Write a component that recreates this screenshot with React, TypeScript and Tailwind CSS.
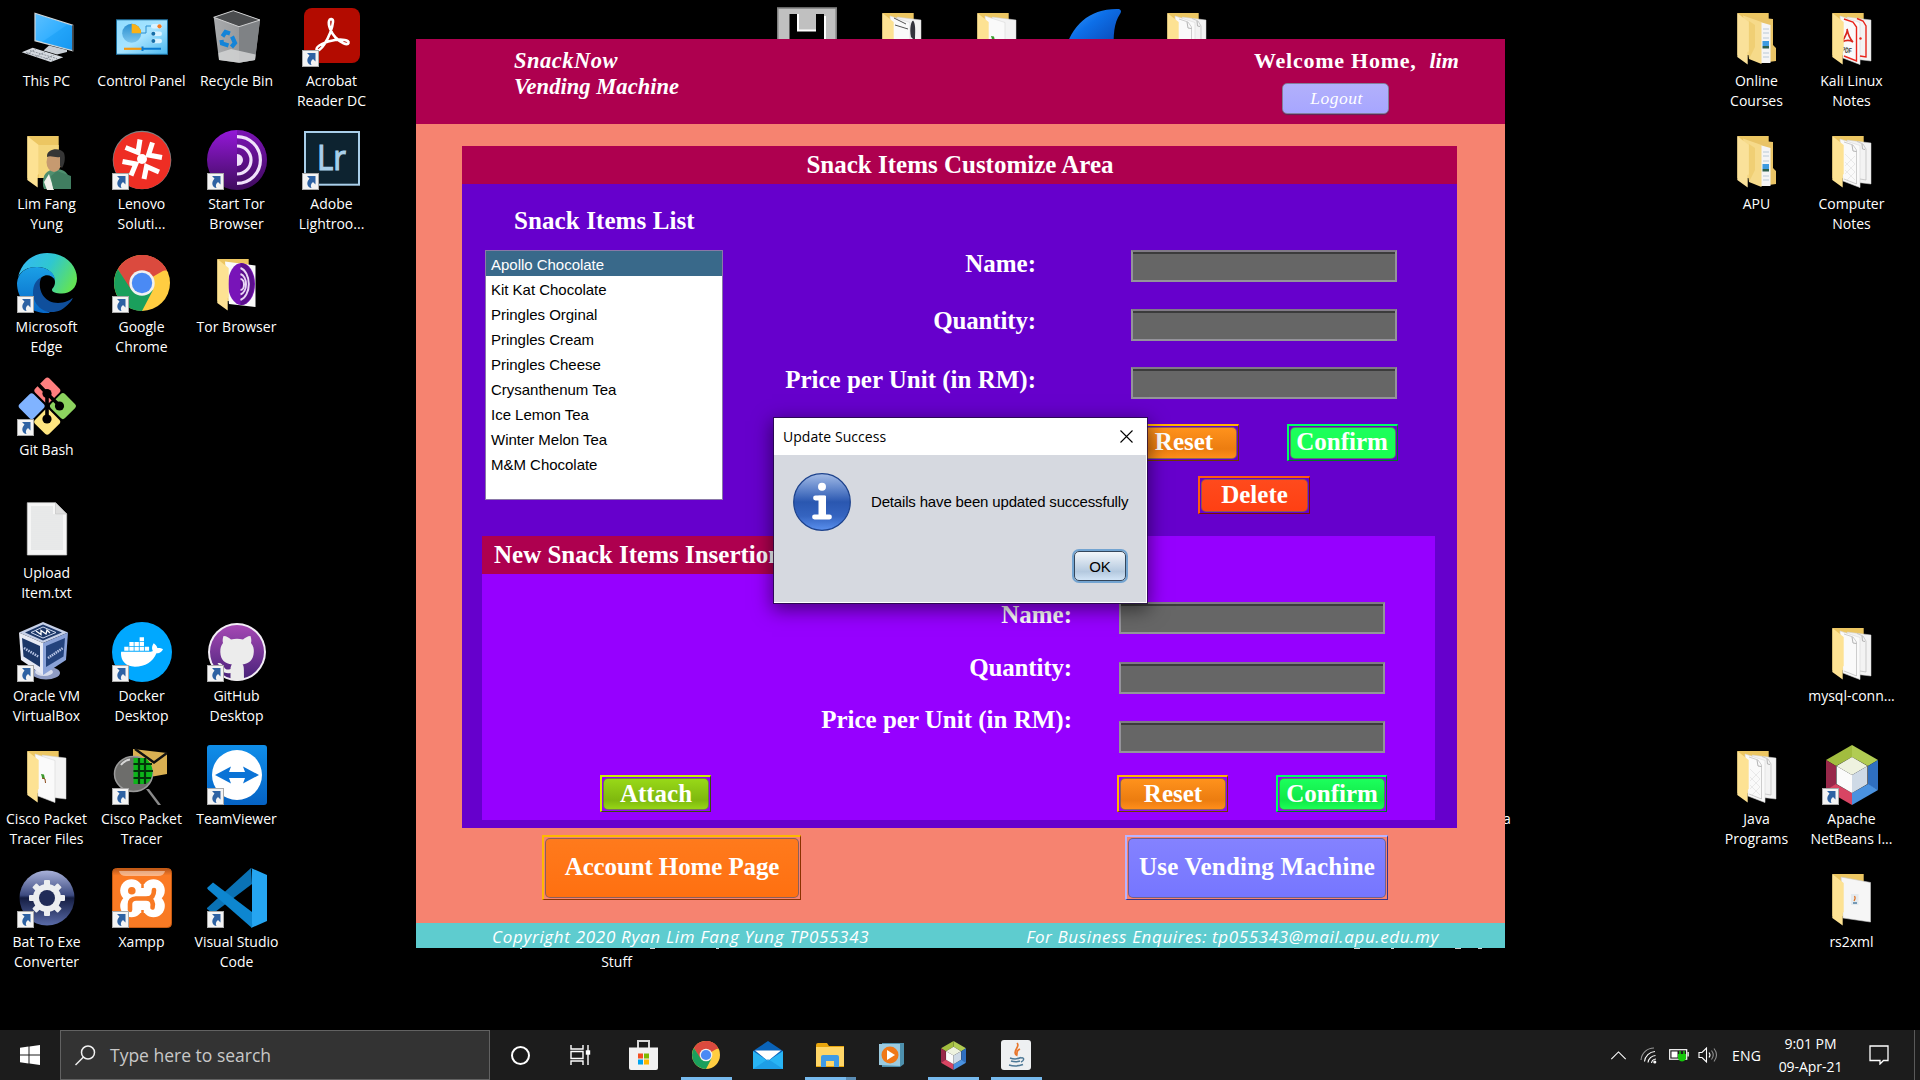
import React from "react";
import { FaDocker } from "react-icons/fa";

type Kids = { children?: React.ReactNode };

const UI = "font-['Open_Sans','Noto_Sans',sans-serif]";
const SERIF = "font-['Liberation_Serif',serif]";

function Svg({ children }: Kids) {
  return (
    <svg viewBox="0 0 60 60" width="60" height="60" className="block">
      {children}
    </svg>
  );
}

/* ---------- desktop icon drawings ---------- */

function ThisPc() {
  return (
    <Svg>
      <defs>
        <linearGradient id="pc" x1="0" y1="0" x2="1" y2="1">
          <stop offset="0" stopColor="#5cc0ff" />
          <stop offset=".5" stopColor="#35b0ff" />
          <stop offset="1" stopColor="#1a94ee" />
        </linearGradient>
      </defs>
      <path d="M18 6.3 55.7 18.3V43.7L18 33.7Z" fill="url(#pc)" stroke="#cfd6da" strokeWidth="1.2" />
      <path d="M55.7 18.3V43.7" stroke="#3a3f44" strokeWidth="1.2" />
      <path d="M25 35 50 18 55 19V43Z" fill="#129bf5" opacity=".45" />
      <path d="M26.5 43.5 32 38.5 50 43 50 45 40 47.5Z" fill="#c9cfd6" />
      <path d="M4.7 45.3 15.7 40.7 46.3 50.3 33.7 55Z" fill="#d5dae0" />
      <path d="M9 45.5 36 53.3M13 43.6 40 51.6M10 47 19 42M19 49.5 28 45M28 52 37 48" stroke="#7b838c" strokeWidth=".8" strokeDasharray="2 1" />
    </Svg>
  );
}

function ControlPanel() {
  return (
    <Svg>
      <defs>
        <linearGradient id="cp" x1="0" y1="0" x2="1" y2="1">
          <stop offset="0" stopColor="#8fdcff" />
          <stop offset=".5" stopColor="#a8e4ff" />
          <stop offset="1" stopColor="#4bb8f0" />
        </linearGradient>
        <linearGradient id="cpp" x1="0" y1="0" x2="0" y2="1">
          <stop offset="0" stopColor="#2a8fd0" />
          <stop offset="1" stopColor="#7cc6ee" />
        </linearGradient>
      </defs>
      <rect x="4.5" y="12.8" width="51" height="34.5" fill="url(#cp)" stroke="#1b6f9f" strokeWidth="1" />
      <circle cx="19.7" cy="26.3" r="9.5" fill="url(#cpp)" />
      <path d="M19.7 26.3V16.8A9.5 9.5 0 0 1 29.2 26.3Z" fill="#fbb116" />
      <path d="M29 26h5v-7h5" fill="none" stroke="#2a8fd0" strokeWidth="1" />
      <rect x="39" y="17" width="11" height="4.5" rx="2.2" fill="#d9f2ff" />
      <circle cx="47.5" cy="19.3" r="2.1" fill="#f47b20" />
      <rect x="39" y="24.5" width="11" height="4.5" rx="2.2" fill="#d9f2ff" />
      <circle cx="41.3" cy="26.8" r="2" fill="#166ea8" />
      <rect x="39" y="31.8" width="11" height="4.5" rx="2.2" fill="#d9f2ff" />
      <circle cx="41.3" cy="34" r="2" fill="#166ea8" />
      <path d="M12 41.8h18" stroke="#f39a14" strokeWidth="2.2" />
      <path d="M30.5 41.8h18.5M30.5 39.5v4.6" stroke="#0a7bd0" strokeWidth="2" />
    </Svg>
  );
}

function RecycleBin() {
  return (
    <Svg>
      <defs>
        <linearGradient id="rb" x1="0" y1="0" x2="1" y2="0">
          <stop offset="0" stopColor="#a9abad" />
          <stop offset="1" stopColor="#8a8c8e" />
        </linearGradient>
      </defs>
      <path d="M6.7 10.3 26.3 3.7 53 13 48 53 32 55.7 12 53Z" fill="url(#rb)" />
      <path d="M32 19.7 53 13 48 53 32 55.7Z" fill="#7f8285" />
      <path d="M6.7 10.3 26.3 3.7 53 13 32 19.7Z" fill="#4a4c4e" stroke="#cfd0d1" strokeWidth="1" />
      <path d="M11.5 46 24 42 48.5 47.5 48 53 32 55.7 12 53Z" fill="#d2d3d4" opacity=".85" />
      <g fill="none" stroke="#1484d8" strokeWidth="4.2">
        <path d="M15.5 29.5 18.5 25 23 26.5" />
        <path d="M25 29.5 28 36 24.5 40" />
        <path d="M21.5 38.6 15 36.5 14.5 33" />
      </g>
    </Svg>
  );
}

function Acrobat() {
  return (
    <Svg>
      <rect x="2" y="1" width="56" height="55" rx="8" fill="#b30b00" />
      <path
        d="M14.5 42.5C14 38.5 24 34.5 33 33C40 32 47.5 33 46.5 36C45.5 39 38.5 35.5 33.5 30.5C29 26 26 18 27 14C27.7 11.2 31.3 11.5 31 15C30.6 21 26.5 31 22.5 37C19 42.5 15.5 45 14.5 42.5Z"
        fill="none"
        stroke="#fff"
        strokeWidth="2.6"
        strokeLinejoin="round"
      />
    </Svg>
  );
}

type FolderKind = "user" | "tor" | "doc" | "plain" | "nested" | "pdf" | "single" | "parrot" | "pen";

function Folder({ kind }: { kind: FolderKind }) {
  const pages = kind === "doc" || kind === "plain" || kind === "pdf" || kind === "parrot" || kind === "pen";
  return (
    <Svg>
      <path d="M10.5 6H41.7V48H10.5Z" fill="#ecc662" />
      <path d="M22 15H41.7V48H22Z" fill="#f4d67c" />
      {pages && (
        <>
          <path d="M25 10 49 13V54L32 52Z" fill="#f3f3f3" stroke="#cfcfcf" strokeWidth=".5" />
          <path d="M18 9 38 15.5V57.5L21 51Z" fill="#fafafa" stroke="#d8d8d8" strokeWidth=".6" />
        </>
      )}
      {(kind === "doc" || kind === "plain" || kind === "pdf") && (
        <>
          <path d="M35 11.5 41 14 44 19V50L38 49" fill="none" stroke={kind === "pdf" ? "#e8251c" : "#b9b9b9"} strokeWidth={kind === "pdf" ? 1.4 : 0.7} />
          <path d="M22 12 31 15 34.5 20V54L22 49" fill="none" stroke={kind === "pdf" ? "#e8251c" : "#b9b9b9"} strokeWidth={kind === "pdf" ? 1.4 : 0.7} />
        </>
      )}
      {(kind === "doc" || kind === "plain") && (
        <path d="M30 15 31 21 34.500 21.500M40 14 40.500 19 43 19.500" fill="none" stroke="#b4b4b4" strokeWidth="1" />
      )}
      {kind === "doc" && <path d="M23 24 33 34M23 32 33 42M23 40 33 50M33 26 23 36M33 34 23 44M33 42 25 50" stroke="#e4e4e4" strokeWidth=".8" />}
      {kind === "pdf" && (
        <>
          <path d="M20 35C23 30 26 24 25 22C26 27 28 32 31 35C28 33 24 33 20 35Z" fill="none" stroke="#d8261c" strokeWidth="1.6" />
          <circle cx="38.5" cy="31.5" r="1.2" fill="#e8251c" />
          <text x="19.500" y="45" fontSize="7.5" fontWeight="700" fill="#333" fontFamily="Liberation Sans" transform="rotate(8 19 45)" textLength="10" lengthAdjust="spacingAndGlyphs">
            PDF
          </text>
        </>
      )}
      {kind === "parrot" && (
        <>
          <path d="M24 29 27 29.5 28 34 25.5 34Z" fill="#3a9a2c" />
          <path d="M25 33 28 34 28.500 38" stroke="#8a4a1a" strokeWidth="1" fill="none" />
        </>
      )}
      {kind === "pen" && <path d="M22 11 34 17M23 18 36 22" stroke="#555" strokeWidth="1" />}
      {kind === "pen" && <path d="M39 30C37 20 40 12 41.500 14C44 18 43 26 43 34Z" fill="#33343c" />}
      {kind === "single" && (
        <>
          <path d="M19 9 48.5 14.5V54L21 50Z" fill="#f6f6f6" stroke="#c9c9c9" strokeWidth=".6" />
          <rect x="29" y="26" width="7.5" height="11" fill="#e4eaee" />
          <path d="M32.5 28Q34 30 32 33" stroke="#e07020" strokeWidth="1.2" fill="none" />
          <path d="M31 35h4" stroke="#5b86a8" strokeWidth="1.6" />
        </>
      )}
      {kind === "tor" && (
        <>
          <path d="M18 8.5 48.5 12.5V54L22 51Z" fill="#fafafa" />
          <ellipse cx="34.5" cy="31" rx="13.5" ry="21" fill="#7814b8" />
          <path d="M33.5 10A13.5 21 0 0 1 33.5 52Z" fill="#5a0f8c" />
          <g fill="none" stroke="#e9d6f5" strokeWidth="2">
            <path d="M33.5 15A11 16.5 0 0 1 33.5 47" />
            <path d="M33.5 21A7 10.5 0 0 1 33.5 41.5" />
            <path d="M33.5 26A3.5 5.5 0 0 1 33.5 37" />
          </g>
        </>
      )}
      {kind === "nested" && (
        <>
          <path d="M18 9 46 12V38L49 41V54L38 55.5Z" fill="#e9c466" />
          <path d="M33 15 43.5 18V56H34Z" fill="#f5f5f5" />
          <path d="M36 22h6M36 26h6M36 31h6M36 46h6M36 50h6" stroke="#b9c9d6" strokeWidth="1" />
          <path d="M35.5 34h6.5v5h-6.5z" fill="#3d9be0" />
          <path d="M35.5 39h6.5v2.5h-6.5z" fill="#2c5f4b" />
          <path d="M16 8.5 34.5 15V57L22 52Z" fill="#f6da8a" />
          <path d="M22 14 28 18V40L22 52Z" fill="#f0cf74" />
        </>
      )}
      <path d="M10.3 6 21.7 15V44L20.7 45V57.5L10.3 50Z" fill={kind === "nested" ? "#fae19a" : "#fde293"} />
      {kind === "user" && (
        <>
          <path d="M26 56C25 44 30 40 38 39C48 39 54 44 54 59H27Z" fill="#4f8f6f" />
          <path d="M32 44 37 60H30L27 52Z" fill="#f0f0ea" />
          <path d="M36 58 34 46 40 41 54 46V59H36Z" fill="#407d60" />
          <ellipse cx="37" cy="32" rx="7.5" ry="10" fill="#c69a70" />
          <path d="M30 26C30 18 44 17 47 23C49 29 47 35 45 38L43 36V27C38 28 34 25 30 27Z" fill="#353535" />
        </>
      )}
    </Svg>
  );
}

function Lenovo() {
  return (
    <Svg>
      <circle cx="30" cy="30" r="29.3" fill="#7d8284" />
      <circle cx="30" cy="30.5" r="28.6" fill="#ee2e24" />
      <circle cx="30" cy="29" r="5" fill="#fff" />
      <path
        d="M28 9.5 26 22.500 13.500 17.500M40.500 12.500 36.500 25 50 27.500M47 42 34.500 36.500 32 49M10.500 31.500 23.800 34 19 45.500"
        fill="none"
        stroke="#fff"
        strokeWidth="5"
      />
    </Svg>
  );
}

function Tor() {
  return (
    <Svg>
      <defs>
        <linearGradient id="tor" x1="0" y1="0" x2="0" y2="1">
          <stop offset="0" stopColor="#9418d8" />
          <stop offset="1" stopColor="#3f0c5e" />
        </linearGradient>
      </defs>
      <circle cx="30" cy="30" r="30" fill="url(#tor)" />
      <path d="M30 0A30 30 0 0 1 30 60Z" fill="#420c5d" opacity=".28" />
      <g fill="none" stroke="#f0e2fa" strokeWidth="3.2">
        <path d="M30 6.6A23.4 23.4 0 0 1 30 53.4" />
        <path d="M30 16A14 14 0 0 1 30 44" />
      </g>
      <path d="M30 24A6 6 0 0 1 30 36Z" fill="#f0e2fa" />
    </Svg>
  );
}

function Lightroom() {
  return (
    <Svg>
      <rect x="3" y="2" width="54" height="52.7" fill="#0d2330" stroke="#a9cfea" strokeWidth="2" />
      <text x="15" y="39.5" fontFamily="Open Sans" fontSize="35" fill="#a9cfea" stroke="#a9cfea" strokeWidth="1.2" textLength="29" lengthAdjust="spacingAndGlyphs">
        Lr
      </text>
    </Svg>
  );
}

function Edge() {
  return (
    <Svg>
      <defs>
        <linearGradient id="e1" x1="0" y1=".2" x2="1" y2=".6">
          <stop offset="0" stopColor="#35b8f4" />
          <stop offset=".5" stopColor="#2fc7d0" />
          <stop offset="1" stopColor="#62e356" />
        </linearGradient>
        <linearGradient id="e2" x1="0" y1="0" x2="0" y2="1">
          <stop offset="0" stopColor="#1ba0e6" />
          <stop offset="1" stopColor="#0768c8" />
        </linearGradient>
      </defs>
      <path d="M1 24C5 8 17 0 30 0C48 0 60 12 60 25.5C60 35 53 40.5 45 40.5C39 40.5 35 39 35 37C35 35 38 34 38 29C38 20 30 14 20 14C10 14 4 18 1 24Z" fill="url(#e1)" />
      <path d="M0 30C1 20 8 14 20 14C30 14 38 20 38 27C35 22 29 21 25 24C15 30 17 49 33 60C14 62 0 47 0 30Z" fill="url(#e2)" />
      <path d="M24.5 24.5C20 32 24 50 41 50C48 50 53 47 55.5 45C56.5 46 51 53 44 57C28 64 16 52 16 40C16 31 20 26 24.5 24.5Z" fill="#0f4f9c" />
    </Svg>
  );
}

function ChromeArt({ size }: { size: number }) {
  return (
    <svg viewBox="0 0 56 56" width={size} height={size} className="block">
      <circle cx="28" cy="28" r="28" fill="#ffcd41" />
      <path d="M28 28 52.3 14A28 28 0 0 0 3.8 14L15.9 35Z" fill="#db4a3e" />
      <path d="M28 15.5H53A28 28 0 0 0 28 0Z" fill="#db4a3e" />
      <path d="M3.8 14A28 28 0 0 0 28 56L39 35 28 40 17 34.5Z" fill="#1a9f5c" />
      <circle cx="28" cy="28" r="12.7" fill="#f1f1f1" />
      <circle cx="28" cy="28" r="10.2" fill="#4a8af4" />
    </svg>
  );
}

function GitBash() {
  return (
    <Svg>
      <g transform="rotate(45 30 30)">
        <rect x="9.3" y="8.8" width="20" height="20" rx="3" fill="#ff7f7f" />
        <rect x="31.3" y="8.8" width="20" height="20" rx="3" fill="#8dd35f" />
        <rect x="9.3" y="31" width="20" height="20" rx="3" fill="#80b3ff" />
        <rect x="31.3" y="31" width="20" height="20" rx="3" fill="#ffe680" />
      </g>
      <path d="M19 6 30 17.5V42M30 17.5 43 30" stroke="#000" strokeWidth="3.6" fill="none" />
      <circle cx="30" cy="17.5" r="4.6" />
      <circle cx="42.5" cy="30" r="4.6" />
      <circle cx="30" cy="43" r="4.6" />
    </Svg>
  );
}

function TextFile() {
  return (
    <Svg>
      <path d="M10.3 3.7H38.5L49.7 15V56H10.3Z" fill="#f6f6f6" stroke="#c8c8c8" strokeWidth=".7" />
      <path d="M38.5 3.7V15H49.7Z" fill="#dedede" stroke="#bdbdbd" strokeWidth=".6" />
      {Array.from({ length: 22 }, (_, i) => (
        <path key={i} d={`M14 ${8 + i * 2}H${i < 4 ? 36 : 46}`} stroke="#d3d5d7" strokeWidth=".8" />
      ))}
    </Svg>
  );
}

function VirtualBox() {
  return (
    <Svg>
      <ellipse cx="29" cy="51" rx="14" ry="6.5" fill="#8f9cc4" />
      <ellipse cx="27" cy="50" rx="9" ry="4" fill="#d7dcec" />
      <path d="M26 0 51 10.5 26 21 2 10.5Z" fill="#c6d0e8" />
      <path d="M2 10.5 26 21V53L4 38Z" fill="#e7eaf5" />
      <path d="M51 10.5 26 21V53L49 38Z" fill="#8aa2d8" />
      <path d="M26 2.5 45 10.5 26 18.5 8 10.5Z" fill="#1c3768" />
      <path d="M26 5 39 10.5 26 16 14 10.5Z" fill="none" stroke="#cfd9f0" strokeWidth="1" />
      <path d="M19 9 24 12.5 24 8.5 29 12 30 8 33 11" fill="none" stroke="#fff" strokeWidth="1.3" />
      <path d="M5 16 23 24V45L6.5 34.5Z" fill="#1c3768" />
      <path d="M48 16 29 24V45L46.5 34.5Z" fill="#24437d" />
      <path d="M7 26 22 35" stroke="#b9c6e6" strokeWidth="2.5" strokeDasharray="1.5 1" />
      <path d="M31 36 46 26" stroke="#b9c6e6" strokeWidth="2.5" strokeDasharray="1.5 .8" />
    </Svg>
  );
}

function Docker() {
  return (
    <div className="flex size-[60px] items-center justify-center rounded-full bg-[#00a8ff]">
      <FaDocker className="h-[40px] w-[42px] text-white" />
    </div>
  );
}

function GithubDesktop() {
  return (
    <Svg>
      <defs>
        <linearGradient id="gh" x1="0" y1="0" x2="0" y2="1">
          <stop offset="0" stopColor="#a548b4" />
          <stop offset="1" stopColor="#49237a" />
        </linearGradient>
      </defs>
      <circle cx="30" cy="30" r="29" fill="#f3eef6" />
      <circle cx="30" cy="30" r="27" fill="url(#gh)" />
      <path
        d="M16.5 14C20 14 22 16 24 17.5C28 16.5 32 16.5 36 17.5C38 16 40.5 14 43.5 14C44.5 17 44.5 19.5 44 21C46.5 24 47 27 46.8 30C46.5 38 42 41.5 35.5 42.5C37 44 37 46 37 57.5C32 59 28 59 23.5 57.5V51C17 52 15 49 14 46C13 43.5 12 43 10.5 41.5C13 40 15.5 42 17 45C18.5 48 21 48 23.500 47C23.5 45 24 43.5 25 42.5C18 41.5 13.5 38 13.3 30C13.2 26 14 23.5 16 21C15.5 19 15.5 17 16.5 14Z"
        fill="#ececec"
      />
    </Svg>
  );
}

function PacketTracer() {
  return (
    <Svg>
      <path d="M21 4 55 8V29L38 32 21 15Z" fill="#d9b052" />
      <path d="M23 4 42 17.5 55 8" fill="none" stroke="#111" strokeWidth="2.4" />
      <path d="M34 44 37 44 49 60H46Z" fill="#8a8a8a" />
      <ellipse cx="21.5" cy="29" rx="19" ry="17.5" fill="#6d6d6b" stroke="#999" strokeWidth="1.5" />
      <path d="M21.5 13H33C44 20 42 36 33 39H21.5Z" fill="#0db51a" />
      <path d="M27 13V39M33 13V39M21.5 19H40M21.5 26H41M21.5 33H39" stroke="#03330a" strokeWidth="2.2" />
      <path d="M9 20Q13 15 18 14.5" stroke="#d8d8d8" strokeWidth="2" fill="none" />
    </Svg>
  );
}

function TeamViewer() {
  return (
    <Svg>
      <defs>
        <linearGradient id="tv" x1="0" y1="0" x2="0" y2="1">
          <stop offset="0" stopColor="#0f8ee9" />
          <stop offset="1" stopColor="#0562c4" />
        </linearGradient>
      </defs>
      <rect width="60" height="60" rx="3" fill="url(#tv)" />
      <circle cx="30" cy="30" r="25" fill="#fff" />
      <path d="M8 30 24 21.5 22 27H38L36 21.5 52 30 36 38.5 38 33H22L24 38.5Z" fill="#0a73d6" />
    </Svg>
  );
}

function BatToExe() {
  return (
    <Svg>
      <defs>
        <linearGradient id="bat" x1="0" y1="0" x2="0" y2="1">
          <stop offset="0" stopColor="#a9b2da" />
          <stop offset=".45" stopColor="#3c4a80" />
          <stop offset=".5" stopColor="#141d42" />
          <stop offset="1" stopColor="#5a6ba8" />
        </linearGradient>
      </defs>
      <circle cx="30" cy="30" r="27.5" fill="url(#bat)" />
      <g fill="#eceef0">
        {[0, 45, 90, 135].map((a) => (
          <rect key={a} x="27" y="12" width="6" height="36" rx="1" transform={`rotate(${a} 30 30)`} />
        ))}
        <circle cx="30" cy="30" r="14" />
      </g>
      <circle cx="30" cy="30" r="8" fill="#202b57" />
    </Svg>
  );
}

function Xampp() {
  return (
    <Svg>
      <defs>
        <linearGradient id="xp" x1="0" y1="0" x2="0" y2="1">
          <stop offset="0" stopColor="#b5561c" />
          <stop offset=".12" stopColor="#fb7a24" />
          <stop offset="1" stopColor="#f87a24" />
        </linearGradient>
      </defs>
      <rect x=".5" y=".5" width="59" height="59" rx="4" fill="url(#xp)" stroke="#c65a12" />
      <path d="M7 3H53Q52 8 46 8H14Q8 8 7 3Z" fill="#fff" opacity=".45" />
      <g fill="#fff">
        <circle cx="19.500" cy="22.5" r="11.3" />
        <circle cx="41.5" cy="22.5" r="11.3" />
        <circle cx="19.5" cy="38" r="11.3" />
        <circle cx="41.5" cy="38" r="11.3" />
        <path d="M19 16H42V45H19Z" />
      </g>
      <circle cx="19.8" cy="22.8" r="3.8" fill="#f87a24" />
      <g fill="none" stroke="#f87a24" strokeWidth="4.600" strokeLinecap="round">
        <path d="M18 42V36Q18 31 24 30.500H36Q42 30 42 22" />
        <path d="M36 30.500Q42 32 40.500 39.500" />
        <path d="M30.500 11V20M30.500 42V50" strokeLinecap="butt" strokeWidth="2.500" />
      </g>
    </Svg>
  );
}

function VsCode() {
  return (
    <Svg>
      <path d="M0 40 44 0 45 16 6 45.5 0 41Z" fill="#0a72b5" />
      <path d="M0 20 6 14.5 45 44V60L1 21.5Z" fill="#0d86d0" />
      <path d="M44 0 60 7V53L44 60C45.5 59 45 57 45 55V5C45 3 45.5 1 44 0Z" fill="#25a5f1" />
    </Svg>
  );
}

function NetBeansArt({ size }: { size: number }) {
  return (
    <svg viewBox="4 0 52 60" height={size} width={(size * 52) / 60} className="block">
      <path d="M30 0 56 15 46 21 30 12Z" fill="#b1cc53" />
      <path d="M30 0 4 15 14 21 30 12Z" fill="#a2bd3f" />
      <path d="M4 15 14 21V40L4 45Z" fill="#98284a" />
      <path d="M56 15 46 21V40L56 45Z" fill="#2f6fc0" />
      <path d="M4 45 14 39 30 48V60Z" fill="#d84563" />
      <path d="M56 45 46 39 30 48V60Z" fill="#4a92e0" />
      <path d="M30 12 45.5 21 30 30 14.5 21Z" fill="#eef2df" />
      <path d="M14.5 21 30 30V48L14.5 39Z" fill="#fbfbfb" />
      <path d="M45.5 21 30 30V48L45.5 39Z" fill="#cfdae6" />
    </svg>
  );
}

function Floppy() {
  return (
    <Svg>
      <rect x=".7" y="1" width="58.5" height="58" fill="#c0c0c0" stroke="#808080" strokeWidth="1.6" />
      <path d="M12.5 7V40H49V9H47V7H39V24H22V7Z" fill="#000" />
      <path d="M21 7V23.5H39" fill="none" stroke="#fff" strokeWidth="2" />
      <path d="M48 9V40" stroke="#fff" strokeWidth="2" />
      <rect x="22" y="7" width="17" height="15" fill="#c0c0c0" />
    </Svg>
  );
}

function Wireshark() {
  return (
    <Svg>
      <defs>
        <linearGradient id="ws" x1="0" y1="0" x2="1" y2="1">
          <stop offset="0" stopColor="#3aa0ff" />
          <stop offset=".4" stopColor="#0d6fe8" />
          <stop offset="1" stopColor="#0a3fa8" />
        </linearGradient>
      </defs>
      <path d="M3 45C9 18 28 1 57 2C59.500 3 59.500 5 58 7C52 16 51 28 52 45Z" fill="url(#ws)" />
    </Svg>
  );
}

function ShortcutArrow() {
  return (
    <span className="absolute bottom-0 left-0 block size-[17px] border border-[#a9a9a9] bg-[#f4f4f4]">
      <svg viewBox="0 0 15 15" className="block size-[15px]">
        <path d="M4 2H12.5V10.5L10 8C7.5 10 7.5 12 8.5 14C4.5 13.5 2.5 9 6.5 4.5Z" fill="#2e62a3" />
      </svg>
    </span>
  );
}

type DesktopItem = { col: number; row: number; art: React.ReactNode; lines: string[]; link?: boolean };

const ITEMS: DesktopItem[] = [
  { col: 0, row: 0, art: <ThisPc />, lines: ["This PC"] },
  { col: 1, row: 0, art: <ControlPanel />, lines: ["Control Panel"] },
  { col: 2, row: 0, art: <RecycleBin />, lines: ["Recycle Bin"] },
  { col: 3, row: 0, art: <Acrobat />, lines: ["Acrobat", "Reader DC"], link: true },
  { col: 0, row: 1, art: <Folder kind="user" />, lines: ["Lim Fang", "Yung"] },
  { col: 1, row: 1, art: <Lenovo />, lines: ["Lenovo", "Soluti..."], link: true },
  { col: 2, row: 1, art: <Tor />, lines: ["Start Tor", "Browser"], link: true },
  { col: 3, row: 1, art: <Lightroom />, lines: ["Adobe", "Lightroo..."], link: true },
  { col: 0, row: 2, art: <Edge />, lines: ["Microsoft", "Edge"], link: true },
  { col: 1, row: 2, art: <div className="p-[2px]"><ChromeArt size={56} /></div>, lines: ["Google", "Chrome"], link: true },
  { col: 2, row: 2, art: <Folder kind="tor" />, lines: ["Tor Browser"] },
  { col: 0, row: 3, art: <GitBash />, lines: ["Git Bash"], link: true },
  { col: 0, row: 4, art: <TextFile />, lines: ["Upload", "Item.txt"] },
  { col: 0, row: 5, art: <VirtualBox />, lines: ["Oracle VM", "VirtualBox"], link: true },
  { col: 1, row: 5, art: <Docker />, lines: ["Docker", "Desktop"], link: true },
  { col: 2, row: 5, art: <GithubDesktop />, lines: ["GitHub", "Desktop"], link: true },
  { col: 0, row: 6, art: <Folder kind="parrot" />, lines: ["Cisco Packet", "Tracer Files"] },
  { col: 1, row: 6, art: <PacketTracer />, lines: ["Cisco Packet", "Tracer"], link: true },
  { col: 2, row: 6, art: <TeamViewer />, lines: ["TeamViewer"], link: true },
  { col: 0, row: 7, art: <BatToExe />, lines: ["Bat To Exe", "Converter"], link: true },
  { col: 1, row: 7, art: <Xampp />, lines: ["Xampp"], link: true },
  { col: 2, row: 7, art: <VsCode />, lines: ["Visual Studio", "Code"], link: true },
  { col: 8, row: 0, art: <Floppy />, lines: [] },
  { col: 9, row: 0, art: <Folder kind="pen" />, lines: [] },
  { col: 10, row: 0, art: <Folder kind="parrot" />, lines: [] },
  { col: 11, row: 0, art: <Wireshark />, lines: [] },
  { col: 12, row: 0, art: <Folder kind="plain" />, lines: [] },
  { col: 6, row: 7, art: null, lines: ["\u00a0", "Stuff"] },
  { col: 18, row: 0, art: <Folder kind="nested" />, lines: ["Online", "Courses"] },
  { col: 19, row: 0, art: <Folder kind="pdf" />, lines: ["Kali Linux", "Notes"] },
  { col: 18, row: 1, art: <Folder kind="nested" />, lines: ["APU"] },
  { col: 19, row: 1, art: <Folder kind="doc" />, lines: ["Computer", "Notes"] },
  { col: 19, row: 5, art: <Folder kind="plain" />, lines: ["mysql-conn..."] },
  { col: 18, row: 6, art: <Folder kind="doc" />, lines: ["Java", "Programs"] },
  { col: 19, row: 6, art: <div className="pl-[4px]"><NetBeansArt size={60} /></div>, lines: ["Apache", "NetBeans I..."], link: true },
  { col: 19, row: 7, art: <Folder kind="single" />, lines: ["rs2xml"] },
];

function Desktop() {
  return (
    <div className="grid h-[1030px] w-[1900px] grid-cols-[repeat(20,95px)] grid-rows-[repeat(8,123px)] pt-[7px]">
      {ITEMS.map((it) => (
        <div
          key={`${it.col}-${it.row}`}
          className="flex w-[94px] flex-col items-center text-[14px] leading-[20px] text-white"
          style={{ gridColumn: it.col + 1, gridRow: it.row + 1 }}
        >
          <div className="relative size-[60px]">
            {it.art}
            {it.link && <ShortcutArrow />}
          </div>
          <div className="mt-[4px] -ml-px text-center whitespace-nowrap">
            {it.lines.map((l) => (
              <div key={l}>{l}</div>
            ))}
          </div>
        </div>
      ))}
    </div>
  );
}

/* ---------- Swing window ---------- */

function Field({ className = "" }: { className?: string }) {
  return (
    <div className={`h-[32px] w-[266px] border-2 border-t-[#807a86] border-r-[#94939a] border-b-[#94939a] border-l-[#94939a] bg-[#666] ${className}`}>
      <div className="h-[2px] bg-[#3b3b3b]" />
    </div>
  );
}

function Bevel({ size, edge, face, text, children }: { size: string; edge: string; face: string; text?: string } & Kids) {
  return (
    <button className={`flex flex-none border-t-2 border-r border-b border-l-2 p-[1px] ${size} ${edge}`}>
      <span
        className={`flex h-full w-full items-center justify-center rounded-[5px] border border-[#6d5a6e]/80 text-[25px] leading-[28px] font-bold whitespace-nowrap text-white ${face} ${text ?? ""}`}
      >
        {children}
      </span>
    </button>
  );
}

const ORANGE_EDGE = "border-t-[#ffb400] border-l-[#ffb400] border-r-[#6b3a00] border-b-[#6b3a00]";
const ORANGE_FACE = "bg-gradient-to-b from-[#ff921c] via-[#ec7d10] via-70% to-[#ff8e1a]";
const GREEN_EDGE = "border-t-[#00ff66] border-l-[#00ff66] border-r-[#007a24] border-b-[#007a24]";
const GREEN_FACE = "bg-gradient-to-b from-[#1cff5c] via-[#10e848] via-70% to-[#1cff55]";
const BTN = "h-[37px] w-[111px]";

const SNACKS = [
  "Apollo Chocolate",
  "Kit Kat Chocolate",
  "Pringles Orginal",
  "Pringles Cream",
  "Pringles Cheese",
  "Crysanthenum Tea",
  "Ice Lemon Tea",
  "Winter Melon Tea",
  "M&M Chocolate",
];

function SnackWindow() {
  return (
    <div className={`absolute top-[39px] left-[416px] h-[909px] w-[1089px] bg-[#f68370] text-white ${SERIF}`}>
      <header className="flex h-[85px] justify-between bg-[#ae004f] pt-[9px] pr-[45px] pl-[98px]">
        <div className="text-[22.5px] leading-[26px] font-bold italic">
          <div className="tracking-[0.5px]">SnackNow</div>
          <div className="tracking-[0.05px]">Vending Machine</div>
        </div>
        <div className="w-[206px]">
          <div className="flex h-[26px] items-center gap-[13px] text-[22px] leading-[26px] font-bold whitespace-nowrap">
            <span className="tracking-[0.75px]">Welcome Home,</span>
            <span className="italic">lim</span>
          </div>
          <button className="mt-[9px] ml-[28px] flex h-[31px] w-[107px] items-center justify-center rounded-[5px] border border-[#82809c] bg-gradient-to-b from-[#b2b0fb] to-[#a7a6ff] pl-[2px] text-[17.5px] tracking-[0.5px] italic shadow-[0_1px_1px_rgba(60,60,90,.7)]">
            Logout
          </button>
        </div>
      </header>

      <main className="mt-[22px] ml-[46px] h-[682px] w-[995px] bg-[#6600cc] text-[25px] leading-[28px] font-bold whitespace-nowrap">
        <h1 className="flex h-[38px] items-center justify-center bg-[#ae004f] pl-px">Snack Items Customize Area</h1>
        <section className="flex h-[352px]">
          <div className="w-[262px] pt-[23px] pl-[23px]">
            <h2 className="pl-[29px] tracking-[0.1px]">Snack Items List</h2>
            <ul className="mt-[15px] h-[250px] w-[238px] border border-[#8a78a8] bg-white text-[15px] leading-[27px] font-normal text-black font-['Liberation_Sans',sans-serif]">
              {SNACKS.map((s, i) => (
                <li key={s} className={`h-[25px] pl-[5px] tracking-[-0.02px] ${i === 0 ? "bg-[#39698a] text-white" : ""}`}>
                  {s}
                </li>
              ))}
            </ul>
          </div>
          <div className="flex w-[312px] flex-col pt-[66px] text-right">
            <div>Name:</div>
            <div className="mt-[28.500px] tracking-[-0.15px]">Quantity:</div>
            <div className="mt-[31px]">Price per Unit (in RM):</div>
          </div>
          <div className="ml-[95px] pt-[66px]">
            <Field />
            <Field className="mt-[27px]" />
            <Field className="mt-[26px]" />
            <div className="mt-[25px] -ml-[3px] flex gap-[48px]">
              <Bevel size={BTN} edge={ORANGE_EDGE} face={ORANGE_FACE} text="pb-[2px]">Reset</Bevel>
              <Bevel size={BTN} edge={GREEN_EDGE} face="bg-gradient-to-b from-[#1cff5c] to-[#18ff50]" text="pb-[2px] pr-[2px]">Confirm</Bevel>
            </div>
            <div className="mt-[15px] ml-[67px] flex">
              <Bevel size="h-[38px] w-[112px]" edge="border-t-[#ff5a10] border-l-[#ff5a10] border-r-[#7a1400] border-b-[#7a1400]" face="bg-gradient-to-b from-[#ff4a1c] to-[#ff4013]" text="pb-[2px]">
                Delete
              </Bevel>
            </div>
          </div>
        </section>

        <section className="ml-[20px] h-[284px] w-[953px] bg-[#9600ff]">
          <h2 className="flex h-[38px] w-[420px] items-center bg-[#ae004f] pl-[12px]">New Snack Items Insertion</h2>
          <div className="flex">
            <div className="w-[238px] pt-[201px] pl-[118px]">
              <Bevel size={BTN} edge="border-t-[#c8f000] border-l-[#c8f000] border-r-[#3a4a10] border-b-[#3a4a10]" face="bg-gradient-to-b from-[#98d818] via-[#7fb90e] via-70% to-[#96d616]">
                Attach
              </Bevel>
            </div>
            <div className="flex w-[352px] flex-col gap-[24.500px] pt-[27px] text-right">
              <div>Name:</div>
              <div className="tracking-[-0.15px]">Quantity:</div>
              <div>Price per Unit (in RM):</div>
            </div>
            <div className="ml-[47px] pt-[28px]">
              <Field />
              <Field className="mt-[28px]" />
              <Field className="mt-[27px]" />
              <div className="mt-[22px] -ml-[2px] flex gap-[48px]">
                <Bevel size={BTN} edge={ORANGE_EDGE} face={ORANGE_FACE}>Reset</Bevel>
                <Bevel size={BTN} edge={GREEN_EDGE} face={GREEN_FACE}>Confirm</Bevel>
              </div>
            </div>
          </div>
        </section>
      </main>

      <div className="mt-[7px] ml-[126px] flex gap-[324px]">
        <Bevel size="h-[65px] w-[259px]" edge="border-t-[#ffb800] border-l-[#ffb800] border-r-[#8a3200] border-b-[#8a3200]" face="bg-gradient-to-b from-[#ff7a1c] to-[#ff7010]" text="pb-[2px] tracking-[-0.12px]">
          Account Home Page
        </Bevel>
        <Bevel size="h-[65px] w-[263px]" edge="border-t-[#b8b4ff] border-l-[#b8b4ff] border-r-[#35358a] border-b-[#35358a]" face="bg-gradient-to-b from-[#8482ff] to-[#7676ff]" text="pb-[2px] tracking-[0.22px]">
          Use Vending Machine
        </Bevel>
      </div>

      <footer className={`mt-[23px] flex h-[25px] items-center justify-between bg-[#5ecccf] pt-[2px] pr-[66px] pl-[76px] text-[17px] leading-[25px] italic ${UI}`}>
        <span className="tracking-[0.690px]">Copyright 2020 Ryan Lim Fang Yung TP055343</span>
        <span className="tracking-[0.630px]">For Business Enquires: tp055343@mail.apu.edu.my</span>
      </footer>
    </div>
  );
}

function Dialog() {
  return (
    <div className="absolute top-[418px] left-[774px] h-[185px] w-[373px] border-r border-b border-white bg-[#d6d9e0] text-black shadow-[0_0_0_1px_rgba(30,10,60,.75),0_5px_18px_2px_rgba(0,0,0,.5)]">
      <div className={`flex h-[37px] items-center justify-between bg-white pr-[13px] pl-[9px] text-[14px] ${UI}`}>
        <span className="tracking-[0.050px]">Update Success</span>
        <svg viewBox="0 0 13 13" className="size-[13px]">
          <path d="M.5.5 12.5 12.5M12.5.5.5 12.5" stroke="#000" strokeWidth="1.1" />
        </svg>
      </div>
      <div className="flex items-center pt-[18px] pl-[19px]">
        <svg viewBox="0 0 58 58" className="size-[58px]">
          <defs>
            <linearGradient id="info" x1="0" y1="0" x2="0" y2="1">
              <stop offset="0" stopColor="#a3bbe6" />
              <stop offset=".3" stopColor="#5a80c8" />
              <stop offset=".5" stopColor="#2a57b0" />
              <stop offset=".75" stopColor="#3564c0" />
              <stop offset="1" stopColor="#5a90ee" />
            </linearGradient>
          </defs>
          <circle cx="29" cy="29" r="28.3" fill="url(#info)" stroke="#1d428c" strokeWidth="1.2" />
          <circle cx="29" cy="13.8" r="4" fill="#fff" />
          <path d="M22.5 25H29.5V44M21.5 44H36.5" fill="none" stroke="#fff" strokeWidth="4.8" strokeLinecap="round" />
          <path d="M25.5 22.7H33V44H25.5Z" fill="#fff" />
        </svg>
        <span className="ml-[20px] text-[15px] leading-[20px] tracking-[-0.165px] whitespace-nowrap font-['Liberation_Sans',sans-serif]">
          Details have been updated successfully
        </span>
      </div>
      <div className="mt-[20px] flex justify-end pr-[20px]">
        <button className="flex h-[30px] w-[52px] items-center justify-center rounded-[5px] border border-[#33465c] bg-gradient-to-b from-[#f3f6fa] via-[#b4c9df] via-70% to-[#d2e4f6] pt-[2px] text-[15px] shadow-[0_0_0_2px_#73a4d1] font-['Liberation_Sans',sans-serif]">
          OK
        </button>
      </div>
    </div>
  );
}

/* ---------- taskbar ---------- */

function TaskIcon({ w, open, children }: { w: string; open?: string } & Kids) {
  return (
    <div className={`flex h-full flex-none flex-col ${w}`}>
      <div className="flex flex-1 items-center justify-center pt-[3px]">{children}</div>
      <div className={`mx-auto h-[3px] w-[51px] ${open ?? ""}`} />
    </div>
  );
}

function Taskbar() {
  return (
    <div className={`flex h-[50px] w-[1920px] items-center bg-[#1c1c1c] text-white ${UI}`}>
      <div className="flex w-[60px] justify-center">
        <svg viewBox="0 0 20 20" className="size-[20px]" fill="#fff">
          <path d="M0 2.8 8.5 1.6V9.5H0ZM9.5 1.5 20 0V9.5H9.5ZM0 10.5H8.5V18.4L0 17.2ZM9.5 10.5H20V20L9.5 18.5Z" />
        </svg>
      </div>
      <div className="flex h-full w-[430px] items-center border border-[#626262] bg-[#333] pl-[14px]">
        <svg viewBox="0 0 21 21" className="size-[21px]" fill="none" stroke="#f2f2f2" strokeWidth="1.5">
          <circle cx="13" cy="7.5" r="6.5" />
          <path d="M8.5 12 .5 20" />
        </svg>
        <span className="ml-[14px] text-[17.5px] text-[#c8c8c8]">Type here to search</span>
      </div>
      <TaskIcon w="w-[60px]">
        <div className="size-[19px] rounded-full border-[2.5px] border-white" />
      </TaskIcon>
      <TaskIcon w="w-[61px]">
        <svg viewBox="0 0 22 20" className="h-[20px] w-[22px]" fill="none" stroke="#fff" strokeWidth="1.4">
          <path d="M1 0V4H13V0M1 20V16H13V20M1 6.5H13V13.5H1ZM18 0V20" />
          <rect x="16.5" y="6" width="3" height="3" fill="#fff" />
        </svg>
      </TaskIcon>
      <TaskIcon w="w-[64px]">
        <svg viewBox="0 0 29 30" className="h-[30px] w-[29px]">
          <path d="M9 8V1H20V8" fill="none" stroke="#d8d8d8" strokeWidth="2" />
          <path d="M0 7.5H29V28Q29 30 27 30H2Q0 30 0 28Z" fill="#f2f2f2" />
          <path d="M9 13.5h5v5h-5z" fill="#f25022" />
          <path d="M15 13.5h5v5h-5z" fill="#7fba00" />
          <path d="M9 19.5h5v5h-5z" fill="#00a4ef" />
          <path d="M15 19.5h5v5h-5z" fill="#ffb900" />
        </svg>
      </TaskIcon>
      <TaskIcon w="w-[62px]" open="bg-[#76b9ed]">
        <ChromeArt size={28} />
      </TaskIcon>
      <TaskIcon w="w-[62px]">
        <svg viewBox="0 0 30 28" className="h-[28px] w-[30px]">
          <path d="M0 10 15 0 30 10V28H0Z" fill="#0a63b8" />
          <path d="M2 9.5H28L15 20Z" fill="#fff" />
          <path d="M0 10 15 20 30 10V28H0Z" fill="#28b4f4" />
          <path d="M0 28 15 18 30 28Z" fill="#1590dc" opacity=".6" />
        </svg>
      </TaskIcon>
      <TaskIcon w="w-[62px]" open="bg-gradient-to-r from-[#76b9ed] from-80% to-[#5a8cb3] to-80%">
        <svg viewBox="0 0 28 24" className="h-[24px] w-[28px]">
          <path d="M0 2Q0 0 2 0H11L13 3H28V24H0Z" fill="#e8a50c" />
          <path d="M0 4H28V23H0Z" fill="#ffd667" />
          <path d="M5 24V14Q5 12 7 12H21Q23 12 23 14V24H18V18H10V24Z" fill="#3f9be6" />
        </svg>
      </TaskIcon>
      <TaskIcon w="w-[59px]">
        <svg viewBox="0 0 26 24" className="h-[24px] w-[26px]">
          <path d="M4 0H26V21L22 24H4Z" fill="#4d90ad" />
          <path d="M1 1 22 1V23L1 22Z" fill="#9ccbe0" />
          <circle cx="12" cy="12" r="8.5" fill="#f07818" />
          <path d="M9 7 17 12 9 17Z" fill="#fff" />
        </svg>
      </TaskIcon>
      <TaskIcon w="w-[67px]" open="bg-[#76b9ed]">
        <NetBeansArt size={29} />
      </TaskIcon>
      <TaskIcon w="w-[58px]" open="bg-[#76b9ed]">
        <div className="flex h-[30px] w-[30px] items-center justify-center rounded-[3px] bg-[#eef0f2]">
          <svg viewBox="0 0 30 30" className="size-[30px]" fill="none">
            <path d="M16 3C20 7 11 10 15 15M19 9C14 11 17 13 15.5 16" stroke="#e8762c" strokeWidth="1.7" />
            <path d="M9 18Q15 20 20 17.5M10 21Q15 22.5 19 21M8 25Q15 27 22 24.5M20 18C24 17 23 21 20 22" stroke="#4d7896" strokeWidth="1.5" />
          </svg>
        </div>
      </TaskIcon>

      <div className="ml-auto flex h-full items-center">
        <svg viewBox="0 0 18 10" className="h-[9px] w-[17px]" fill="none" stroke="#fff" strokeWidth="1.2">
          <path d="M1 9 9 1 17 9" />
        </svg>
        <svg viewBox="0 0 18 18" className="ml-[13px] size-[18px]" fill="none" stroke="#fff" strokeWidth="1.1">
          <path d="M1 14A13 13 0 0 1 14 2" opacity=".55" />
          <path d="M4.5 15.5A11 11 0 0 1 15 5.5M8 16.5A8 8 0 0 1 15.5 9.5M11.5 17A5 5 0 0 1 16 13" />
          <circle cx="14.8" cy="16" r="1" fill="#fff" />
        </svg>
        <svg viewBox="0 0 20 16" className="ml-[11px] h-[16px] w-[20px]">
          <rect x=".7" y="2.7" width="17" height="9.5" fill="none" stroke="#fff" strokeWidth="1.2" />
          <rect x="2.5" y="4.5" width="6" height="6" fill="#fff" />
          <path d="M18.5 5h1.3v4.5h-1.3z" fill="#fff" />
          <path d="M9 7H17V12Q13 17 9 12Z" fill="#16c60c" />
          <path d="M11 4v3M15 4v3" stroke="#16c60c" strokeWidth="1.5" />
        </svg>
        <svg viewBox="0 0 20 18" className="ml-[9px] h-[18px] w-[20px]" fill="none" stroke="#fff" strokeWidth="1.1">
          <path d="M1 6.5H4L8.5 2V16L4 11.5H1Z" />
          <path d="M11 6.5Q13 9 11 11.5" />
          <path d="M13.5 4.5Q17 9 13.5 13.5M16 2.5Q21 9 16 15.5" opacity=".5" />
        </svg>
        <span className="ml-[14px] w-[30px] text-[14px] tracking-[0.2px]">ENG</span>
        <div className="ml-[12px] w-[72px] pl-px text-center text-[14px] leading-[23px] tracking-[-0.05px] whitespace-nowrap">
          <div>9:01 PM</div>
          <div>09-Apr-21</div>
        </div>
        <svg viewBox="0 0 20 20" className="ml-[23px] size-[20px]" fill="none" stroke="#fff" strokeWidth="1.3">
          <path d="M1 1H19V15.5H14.5L11 19V15.5H1Z" />
        </svg>
        <div className="mr-[5px] ml-[25px] h-full w-px bg-[#5a5a5a]" />
      </div>
    </div>
  );
}

/* Slivers of desktop labels that peek out past the window's edges. */
const DESCENDERS = [
  "left-[520px] w-[2px]",
  "left-[650px] w-[5px]",
  "left-[716px] w-[3px]",
  "left-[1354px] w-[6px]",
  "left-[1391px] w-[3px]",
  "left-[1455px] w-[6px]",
  "left-[1478px] w-[4px]",
];

export default function App() {
  return (
    <div className={`relative h-[1080px] w-[1920px] overflow-hidden bg-black ${UI}`}>
      <Desktop />
      {DESCENDERS.map((c) => (
        <span key={c} className={`absolute top-[948px] block h-px bg-white/80 ${c}`} />
      ))}
      <span className="absolute top-[809px] left-[1503px] text-[14px] leading-[20px] text-white">a</span>
      <SnackWindow />
      <Dialog />
      <Taskbar />
    </div>
  );
}
